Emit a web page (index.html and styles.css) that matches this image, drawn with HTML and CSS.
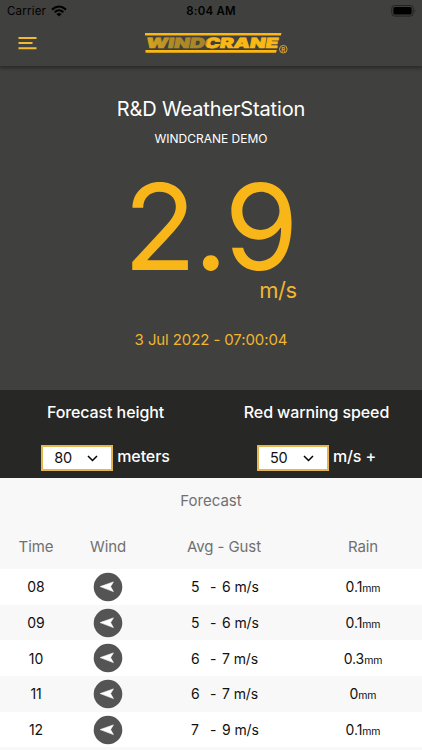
FILE: index.html
```html
<!DOCTYPE html>
<html lang="en">
<head>
    <meta charset="UTF-8">
    <meta name="viewport" content="width=device-width, initial-scale=1.0">
    <title>Windcrane</title>
    <link rel="stylesheet" href="styles.css">
</head>
<body>

    <svg class="defs" width="0" height="0">
        <symbol id="arrow" viewBox="0 0 30 30">
            <circle cx="15" cy="15" r="14.3" fill="#545454"/>
            <path d="M7.2 14.6 L20.4 9.9 L17.6 14.6 L20.4 19.6 Z" fill="#fff" stroke="#fff" stroke-width=".6" stroke-linejoin="round"/>
        </symbol>
    </svg>

    <header class="header">
        <div class="status-bar">
            <div class="carrier">
                <span>Carrier</span>
                <svg width="16" height="12" viewBox="0 0 16 12">
                    <path d="M1 4.6 Q8 -1.6 15 4.6" fill="none" stroke="#000" stroke-width="2.1"/>
                    <path d="M3.6 7.2 Q8 3.4 12.4 7.2" fill="none" stroke="#000" stroke-width="2"/>
                    <path d="M5.4 8.9 Q8 6.9 10.6 8.9 L8 11.5 Z" fill="#000"/>
                </svg>
            </div>
            <div class="clock">8:04 AM</div>
            <div class="battery">
                <svg width="26" height="12" viewBox="0 0 26 12">
                    <rect x=".8" y=".5" width="21.4" height="10.6" rx="3" fill="none" stroke="#222221"/>
                    <rect x="2.4" y="2.1" width="18.2" height="7.4" rx="1.6" fill="#000"/>
                    <path d="M23.6 4 Q25.4 5.8 23.6 7.6 Z" fill="#222221"/>
                </svg>
            </div>
        </div>
        <div class="nav">
            <svg class="menu" width="19" height="14" viewBox="0 0 19 14">
                <path d="M.5 2 H18.5 M.5 7.1 H14.5 M.5 12.3 H18.5" stroke="#f0ba37" stroke-width="2"/>
            </svg>
            <svg class="logo" width="146" height="24" viewBox="0 0 146 24">
                <defs>
                    <linearGradient id="gold" gradientUnits="userSpaceOnUse" x1="0" y1="0" x2="134" y2="0">
                        <stop offset="0" stop-color="#dba61d"/>
                        <stop offset=".2" stop-color="#b08a25"/>
                        <stop offset=".44" stop-color="#a98526"/>
                        <stop offset=".46" stop-color="#fbb815"/>
                        <stop offset="1" stop-color="#fbb815"/>
                    </linearGradient>
                </defs>
                <path d="M1 2 H137.5 L136.8 4.5 H1 Z M1.5 19 H132.8 L132 21.7 H1.5 Z" fill="#fbb815"/>
                <text class="logo-text" transform="translate(1.5 17) skewX(-10)" x="0" y="0" textLength="132" lengthAdjust="spacingAndGlyphs" fill="url(#gold)" stroke="url(#gold)">WINDCRANE</text>
                <circle cx="139.3" cy="18.2" r="3.8" fill="none" stroke="#d9a526"/>
                <text class="logo-mark" x="137.3" y="20.5">R</text>
            </svg>
        </div>
    </header>

    <main>
        <section class="station">
            <h1>R&amp;D WeatherStation</h1>
            <p class="owner">WINDCRANE DEMO</p>
            <div class="speed">2.9</div>
            <div class="unit">m/s</div>
            <p class="date">3 Jul 2022 - 07:00:04</p>
        </section>

        <section class="settings">
            <div class="setting">
                <label>Forecast height</label>
                <div class="field">
                    <div class="select">80
                        <svg width="11" height="7" viewBox="0 0 11 7"><path d="M1 1 L5.5 5.5 L10 1" fill="none" stroke="#000" stroke-width="1.5"/></svg>
                    </div>
                    <span>meters</span>
                </div>
            </div>
            <div class="setting">
                <label>Red warning speed</label>
                <div class="field">
                    <div class="select">50
                        <svg width="11" height="7" viewBox="0 0 11 7"><path d="M1 1 L5.5 5.5 L10 1" fill="none" stroke="#000" stroke-width="1.5"/></svg>
                    </div>
                    <span>m/s +</span>
                </div>
            </div>
        </section>

        <section class="forecast">
            <h2>Forecast</h2>
            <div class="row head">
                <div>Time</div>
                <div>Wind</div>
                <div>Avg - Gust</div>
                <div>Rain</div>
            </div>
            <div class="row">
                <div>08</div>
                <div><svg class="arrow"><use href="#arrow"/></svg></div>
                <div class="wind"><span>5</span><span>-</span><span>6 m/s</span></div>
                <div>0.1<small>mm</small></div>
            </div>
            <div class="row">
                <div>09</div>
                <div><svg class="arrow"><use href="#arrow"/></svg></div>
                <div class="wind"><span>5</span><span>-</span><span>6 m/s</span></div>
                <div>0.1<small>mm</small></div>
            </div>
            <div class="row">
                <div>10</div>
                <div><svg class="arrow"><use href="#arrow"/></svg></div>
                <div class="wind"><span>6</span><span>-</span><span>7 m/s</span></div>
                <div>0.3<small>mm</small></div>
            </div>
            <div class="row">
                <div>11</div>
                <div><svg class="arrow"><use href="#arrow"/></svg></div>
                <div class="wind"><span>6</span><span>-</span><span>7 m/s</span></div>
                <div>0<small>mm</small></div>
            </div>
            <div class="row">
                <div>12</div>
                <div><svg class="arrow"><use href="#arrow"/></svg></div>
                <div class="wind"><span>7</span><span>-</span><span>9 m/s</span></div>
                <div>0.1<small>mm</small></div>
            </div>
        </section>
    </main>

</body>
</html>
```
FILE: styles.css
```css
* {
    box-sizing: border-box;
}

body {
    margin: 0;
    height: 750px;
    overflow: hidden;
    font-family: Inter, "Liberation Sans", sans-serif;
    background: #f8f8f8;
    color: #111;
}

h1, h2, p {
    margin: 0;
    font-weight: 400;
}

.defs {
    display: block;
}

/* Header */
.header {
    height: 66px;
    background: #40403e;
    box-shadow: 0 1px 4px 1px rgba(0, 0, 0, 0.4);
    position: relative;
}

.status-bar {
    display: grid;
    grid-template-columns: 1fr 1fr 1fr;
    align-items: center;
    height: 22px;
    padding: 0 5px 0 7px;
    font-size: 11.5px;
    color: #000;
}

.carrier {
    display: flex;
    align-items: center;
    gap: 5px;
    letter-spacing: 0.2px;
}

.clock {
    text-align: center;
    font-weight: 600;
    letter-spacing: 0.2px;
    margin-left: -2px;
}

.battery {
    display: flex;
    justify-content: flex-end;
}

.nav {
    display: grid;
    grid-template-columns: 126px 146px;
    align-items: center;
    padding: 9px 0 0 18px;
}

.logo-text {
    font-family: Inter, sans-serif;
    font-size: 14px;
    font-weight: 900;
    stroke-width: 0.7px;
}

.logo-mark {
    font-size: 6px;
    font-weight: 700;
    fill: #d9a526;
}

/* Current reading */
.station {
    height: 324px;
    padding-top: 30px;
    background: #40403e;
    color: #fff;
    text-align: center;
}

.station h1 {
    font-size: 20px;
    line-height: 26px;
    letter-spacing: -0.15px;
}

.owner {
    margin-top: 7px;
    font-size: 12px;
    line-height: 20px;
}

.speed {
    margin-top: 16px;
    padding-right: 3px;
    font-size: 120px;
    line-height: 124px;
    letter-spacing: -3px;
    color: #f9b618;
}

.unit {
    margin-top: -13px;
    padding-left: 134px;
    font-size: 22px;
    line-height: 28px;
    letter-spacing: -0.4px;
    color: #f0b62f;
}

.date {
    margin-top: 25px;
    font-size: 15px;
    line-height: 22px;
    letter-spacing: -0.1px;
    color: #f0b62f;
}

/* Settings */
.settings {
    display: grid;
    grid-template-columns: 1fr 1fr;
    height: 88px;
    background: #272726;
    color: #fff;
    font-size: 16px;
    font-weight: 500;
    letter-spacing: -0.1px;
}

.setting {
    display: flex;
    flex-direction: column;
    align-items: center;
    padding-top: 12px;
}

.setting label {
    line-height: 20px;
}

.field {
    display: flex;
    gap: 4px;
    margin-top: 23px;
    line-height: 22px;
}

.select {
    display: flex;
    align-items: center;
    justify-content: space-between;
    width: 72px;
    height: 26px;
    padding: 0 13px 0 11px;
    border: 2px solid #e5b650;
    background: #fff;
    color: #111;
    font-size: 14.5px;
    font-weight: 400;
}

/* Forecast */
.forecast h2 {
    height: 47px;
    font-size: 15px;
    line-height: 46px;
    text-align: center;
    color: #707070;
}

.row {
    display: grid;
    grid-template-columns: 72px 72px 160px 118px;
    align-items: center;
    height: 35.7px;
    font-size: 14px;
    letter-spacing: -0.1px;
    text-align: center;
    background: #fff;
}

.row:nth-child(even) {
    background: #f8f8f8;
}

.row.head {
    height: 44px;
    font-size: 15px;
    padding-bottom: 2px;
    color: #707070;
}

.arrow {
    display: block;
    width: 30px;
    height: 30px;
    margin: 0 auto;
}

.wind {
    display: grid;
    grid-template-columns: 19px 12px auto;
    padding-left: 47px;
    text-align: left;
}

.row small {
    font-size: 10.5px;
}
```
